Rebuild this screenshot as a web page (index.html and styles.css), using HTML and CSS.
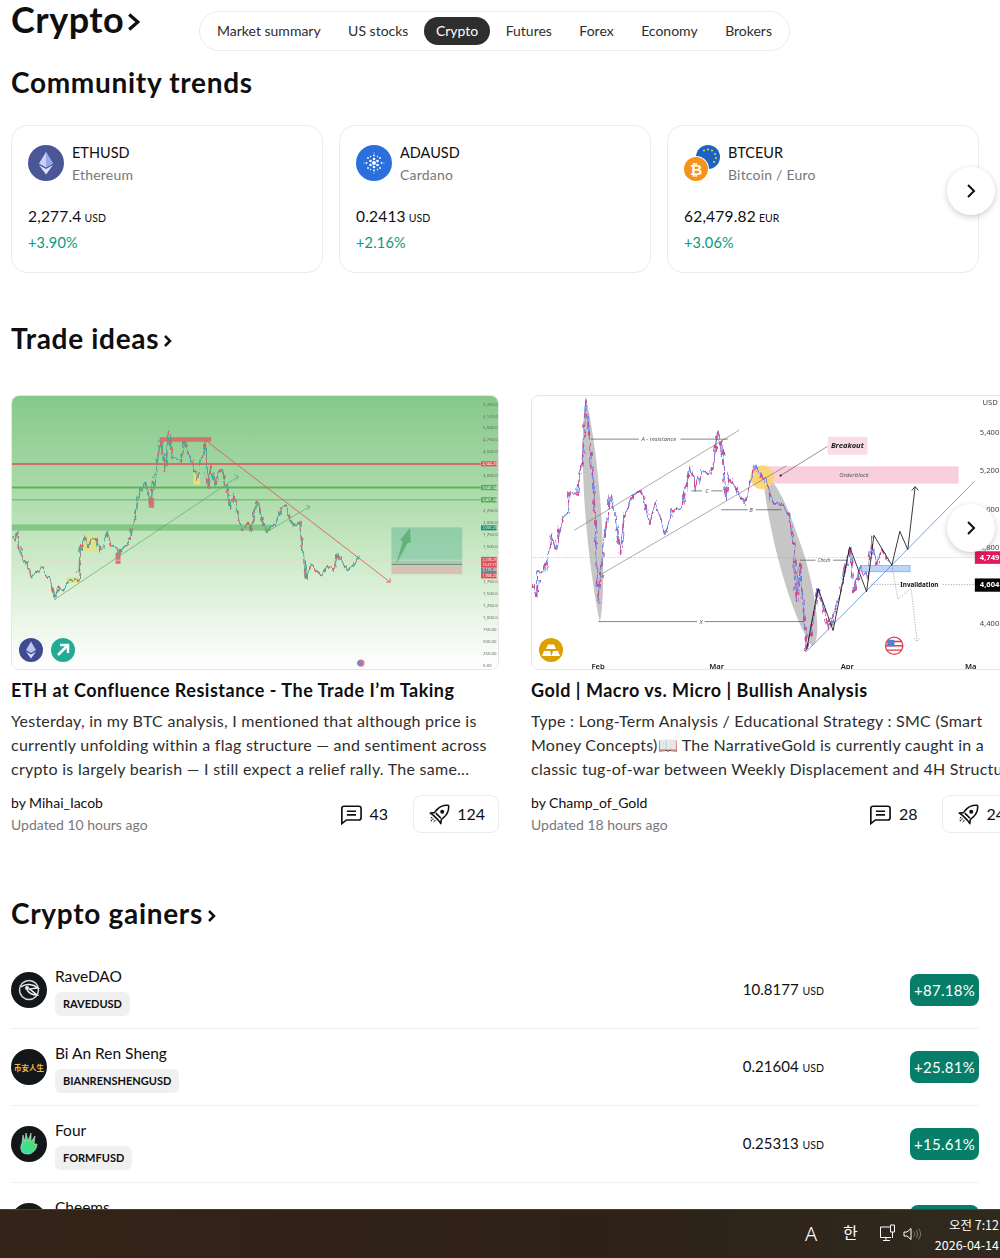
FILE: index.html
```html
<!DOCTYPE html>
<html lang="en">
<head>
<meta charset="utf-8">
<title>Crypto</title>
<link rel="stylesheet" href="styles.css">
</head>
<body>
<svg class="defs" width="0" height="0"><defs><filter id="jit" x="-5%" y="-5%" width="110%" height="110%"><feTurbulence type="fractalNoise" baseFrequency="0.1 0.035" numOctaves="2" seed="4"/><feDisplacementMap in="SourceGraphic" scale="20" xChannelSelector="R" yChannelSelector="G"/></filter></defs></svg>
<div class="page">
  <header class="top">
    <h1 class="title">Crypto<svg class="chev-lg" viewBox="0 0 12 18"><path d="M2 2l8 7-8 7" fill="none" stroke="currentColor" stroke-width="3"/></svg></h1>
    <nav class="tabs">
      <a class="tab">Market summary</a><a class="tab">US stocks</a><a class="tab active">Crypto</a><a class="tab">Futures</a><a class="tab">Forex</a><a class="tab">Economy</a><a class="tab">Brokers</a>
    </nav>
  </header>

  <h2 class="h-community">Community trends</h2>
  <section class="trends">
    <article class="trend">
      <div class="trend-head">
        <svg class="coin" viewBox="0 0 36 36"><circle cx="18" cy="18" r="18" fill="#4b5699"/><path d="M18 7l-7 11.500 7 4 7-4z" fill="#c9d2f5"/><path d="M18 7v15.500l7-4z" fill="#98a6e6"/><path d="M11 20l7 9.500 7-9.500-7 4z" fill="#dfe4fb"/></svg>
        <div class="trend-names"><div class="sym">ETHUSD</div><div class="desc-name">Ethereum</div></div>
      </div>
      <div class="quote">2,277.4<span class="cur">USD</span></div>
      <div class="chg">+3.90%</div>
    </article>
    <article class="trend">
      <div class="trend-head">
        <svg class="coin" viewBox="0 0 36 36"><circle cx="18" cy="18" r="18" fill="#2a6fdb"/><g fill="#fff"><circle cx="18" cy="18" r="2"/><circle cx="14.500" cy="16" r="1.300"/><circle cx="21.500" cy="16" r="1.300"/><circle cx="14.500" cy="20" r="1.300"/><circle cx="21.500" cy="20" r="1.300"/><circle cx="18" cy="14" r="1.300"/><circle cx="18" cy="22" r="1.300"/><circle cx="18" cy="10.500" r=".9"/><circle cx="18" cy="25.500" r=".9"/><circle cx="12" cy="13" r=".9"/><circle cx="24" cy="13" r=".9"/><circle cx="12" cy="23" r=".9"/><circle cx="24" cy="23" r=".9"/><circle cx="10.500" cy="18" r=".9"/><circle cx="25.500" cy="18" r=".9"/><circle cx="14.500" cy="11.500" r=".7"/><circle cx="21.500" cy="11.500" r=".7"/><circle cx="14.500" cy="24.500" r=".7"/><circle cx="21.500" cy="24.500" r=".7"/><circle cx="8" cy="18" r=".5"/><circle cx="28" cy="18" r=".5"/><circle cx="18" cy="8" r=".5"/><circle cx="18" cy="28" r=".5"/></g></svg>
        <div class="trend-names"><div class="sym">ADAUSD</div><div class="desc-name">Cardano</div></div>
      </div>
      <div class="quote">0.2413<span class="cur">USD</span></div>
      <div class="chg">+2.16%</div>
    </article>
    <article class="trend">
      <div class="trend-head">
        <svg class="coin" viewBox="0 0 36 36"><circle cx="24" cy="12" r="12" fill="#1d63c2"/><g fill="#f4d23c"><circle cx="24" cy="4.500" r="1"/><circle cx="28" cy="5.500" r="1"/><circle cx="31" cy="9" r="1"/><circle cx="32" cy="13" r="1"/><circle cx="30" cy="17" r="1"/><circle cx="20" cy="5.500" r="1"/></g><circle cx="12" cy="24" r="13" fill="#fff"/><circle cx="12" cy="24" r="12" fill="#f7931a"/><text class="btc-glyph" x="12" y="29.500" text-anchor="middle">₿</text></svg>
        <div class="trend-names"><div class="sym">BTCEUR</div><div class="desc-name">Bitcoin / Euro</div></div>
      </div>
      <div class="quote">62,479.82<span class="cur">EUR</span></div>
      <div class="chg">+3.06%</div>
    </article>
    <button class="next next-trends"><svg viewBox="0 0 18 18"><path d="M6 3l6 6-6 6" fill="none" stroke="currentColor" stroke-width="2"/></svg></button>
  </section>

  <h2 class="h-section h-ideas">Trade ideas<svg class="chev-md" viewBox="0 0 10 14"><path d="M2 2l5 5-5 5" fill="none" stroke="currentColor" stroke-width="2.500"/></svg></h2>
  <section class="ideas">
    <article class="idea">
      <div class="shot">
        <svg class="chart" viewBox="33 15 1464 823" preserveAspectRatio="none">
          <defs>
            <linearGradient id="gl" x1="0" y1="0" x2="0" y2="1">
              <stop offset="0" stop-color="#86c98a"/><stop offset=".3" stop-color="#a5d8a4"/><stop offset=".6" stop-color="#cdeac8"/><stop offset=".8" stop-color="#e8f5e4"/><stop offset="1" stop-color="#fff"/>
            </linearGradient>
          </defs>
          <rect x="33" y="15" width="1464" height="823" fill="url(#gl)"/>
          <rect x="33" y="402" width="780" height="19" fill="#70bd76" opacity=".75"/>
          <rect x="478" y="139" width="155" height="14" fill="#d1776a"/>
          <rect x="250" y="437" width="40" height="46" fill="#e9e17c" opacity=".85"/>
          <rect x="197" y="562" width="41" height="16" fill="#e9e17c" opacity=".9"/>
          <rect x="580" y="250" width="19" height="32" fill="#e9e17c"/>
          <rect x="445" y="322" width="16" height="30" fill="#d9737a"/>
          <rect x="345" y="488" width="15" height="33" fill="#d9737a"/>
          <rect x="1176" y="411" width="213" height="112" fill="#6dbb9b" opacity=".55"/>
          <rect x="1176" y="525" width="213" height="27" fill="#d9a7a0" opacity=".6"/>
          <path d="M33 220H1445" stroke="#df4f56" stroke-width="4"/>
          <path d="M33 291H1445" stroke="#5fb35f" stroke-width="6"/>
          <path d="M33 328H1445" stroke="#5fb35f" stroke-width="3"/>
          <path d="M33 510H1445" stroke="#e6d9c5" stroke-width="2"/>
          <path d="M1176 523H1389" stroke="#708d80" stroke-width="3"/>
          <path d="M162 628L715 257M703 252l12 5-6 12M800 425L930 348M918 344l12 4-6 11" fill="none" stroke="#5aa95f" stroke-width="2"/>
          <path d="M615 148L1172 576M1160 576h12v-12" fill="none" stroke="#e05260" stroke-width="2.500"/>
          <path d="M1190 522l20-68 -8-4 30-38 2 46 -8-2z" fill="#62b27b"/>
          <g class="jitter">
          <polyline class="price" stroke="#3fae9c" points="33,440 42,448 50,425 58,490 66,510 75,520 82,515 90,560 105,548 125,530 132,548 150,570 162,620 175,592 190,600 205,570 235,570 238,480 250,440 262,470 270,450 285,445 297,480 305,475 320,425 330,465 345,470 355,490 370,470 385,460 395,405 405,380 415,310 435,275 450,340 460,270 470,220 480,150 495,240 505,120 515,200 540,210 555,150 565,190 580,230 590,270 615,155 625,300 632,225 645,280 655,250 665,235 680,290 690,355 700,310 715,375 725,420 745,395 755,425 760,370 775,335 785,385 800,425 830,395 845,355 860,345 870,385 885,410 900,395 910,490 920,565 930,525 965,555 985,525 1000,540 1015,490 1030,520 1045,540 1060,525 1080,500"/>
          <polyline class="price price-red" stroke="#e0606a" points="33,440 42,448 50,425 58,490 66,510 75,520 82,515 90,560 105,548 125,530 132,548 150,570 162,620 175,592 190,600 205,570 235,570 238,480 250,440 262,470 270,450 285,445 297,480 305,475 320,425 330,465 345,470 355,490 370,470 385,460 395,405 405,380 415,310 435,275 450,340 460,270 470,220 480,150 495,240 505,120 515,200 540,210 555,150 565,190 580,230 590,270 615,155 625,300 632,225 645,280 655,250 665,235 680,290 690,355 700,310 715,375 725,420 745,395 755,425 760,370 775,335 785,385 800,425 830,395 845,355 860,345 870,385 885,410 900,395 910,490 920,565 930,525 965,555 985,525 1000,540 1015,490 1030,520 1045,540 1060,525 1080,500"/>
          </g>
          <g fill="#df4f56"><rect x="1446" y="212" width="47" height="15"/><rect x="1446" y="500" width="47" height="32"/><rect x="1446" y="549" width="47" height="16"/></g>
          <rect x="1446" y="532" width="47" height="17" fill="#7b7f8a"/>
          <g fill="#4fae55"><rect x="1446" y="283" width="47" height="16"/><rect x="1446" y="320" width="47" height="16"/></g>
          <rect x="1446" y="405" width="47" height="15" fill="#138b75"/>
          <g class="tagtx"><text x="1450" y="224">4,344.23</text><text x="1450" y="295">3,547.34</text><text x="1450" y="332">3,401.24</text><text x="1450" y="417">2,092.23</text><text x="1450" y="512">2,278.21</text><text x="1450" y="527">15:27:11</text><text x="1450" y="544">2,175.30</text><text x="1450" y="561">1,998.23</text></g>
          <g class="ticks"><text x="1452" y="45">5,250.00</text><text x="1452" y="80">5,125.00</text><text x="1452" y="115">5,000.00</text><text x="1452" y="151">4,750.00</text><text x="1452" y="187">4,500.00</text><text x="1452" y="258">3,000.00</text><text x="1452" y="365">2,250.00</text><text x="1452" y="401">2,000.00</text><text x="1452" y="437">1,750.00</text><text x="1452" y="473">1,500.00</text><text x="1452" y="580">1,750.00</text><text x="1452" y="615">1,500.00</text><text x="1452" y="651">1,250.00</text><text x="1452" y="687">1,000.00</text><text x="1452" y="723">750.00</text><text x="1452" y="759">500.00</text><text x="1452" y="795">250.00</text><text x="1452" y="831">0.00</text></g>
          <circle cx="1084" cy="820" r="11" fill="#e9506a" opacity=".8"/><circle cx="1081" cy="820" r="8" fill="#7d84c9"/>
        </svg>
        <div class="chips">
          <svg class="chip-icon" viewBox="0 0 24 24"><circle cx="12" cy="12" r="12" fill="#3f4a91"/><path d="M12 3.500l-5 8.500 5 3 5-3z" fill="#b9c4f0"/><path d="M7 13.500l5 7 5-7-5 3z" fill="#d9dff8"/></svg>
          <svg class="chip-icon" viewBox="0 0 24 24"><circle cx="12" cy="12" r="12" fill="#22ab94"/><path d="M7 17L16.500 7.500M9 7h8v8" fill="none" stroke="#fff" stroke-width="2.500"/></svg>
        </div>
      </div>
      <h3 class="idea-title">ETH at Confluence Resistance - The Trade I’m Taking</h3>
      <p class="idea-text">Yesterday, in my BTC analysis, I mentioned that although price is<br>currently unfolding within a flag structure — and sentiment across<br>crypto is largely bearish — I still expect a relief rally. The same...</p>
      <footer class="idea-foot">
        <div class="by"><div class="author">by Mihai_Iacob</div><div class="updated">Updated 10 hours ago</div></div>
        <div class="comments"><svg class="ic" viewBox="0 0 24 24"><path d="M2 22.500V6a2.500 2.500 0 0 1 2.500-2.500h16A2.500 2.500 0 0 1 23 6v10a2.500 2.500 0 0 1-2.500 2.500H7z" fill="none" stroke="currentColor" stroke-width="1.800"/><path d="M7.500 9h10M7.500 13h10" stroke="currentColor" stroke-width="1.800"/></svg><span>43</span></div>
        <div class="boost"><svg class="ic" viewBox="0 0 24 24"><path d="M22.500 2.500c-6-.5-10 1.500-13 5l-2.500 3-4.500.5L6 13.500M22.500 2.500c.5 6-1.500 10-5 13l-3 2.500-.5 4.500L11.500 19M8.500 11l5.500 5.500M6 13.500l5.500 5.500" fill="none" stroke="currentColor" stroke-width="1.700" stroke-linejoin="round"/><circle cx="15.500" cy="9.500" r="2.200" fill="currentColor"/><path d="M6 17l-3 3M8 19l-2 2M4.500 15.500l-2 2" stroke="currentColor" stroke-width="1.300" stroke-dasharray="1.500 1"/></svg><span>124</span></div>
      </footer>
    </article>
    <article class="idea">
      <div class="shot">
        <svg class="chart" viewBox="18 15 1464 823" preserveAspectRatio="none">
          <rect x="18" y="15" width="1464" height="823" fill="#fff"/>
          <rect x="680" y="227" width="623" height="52" fill="#f9cfdc"/>
          <path d="M180 15C150 240 200 600 222 695 240 640 240 300 180 15z" fill="#c6c6c6"/>
          <path d="M715 270C735 450 800 680 860 768 890 760 880 640 840 500 800 380 770 300 735 265z" fill="#c6c6c6"/>
          <circle cx="712" cy="260" r="36" fill="#fbd36a" opacity=".85"/>
          <path d="M18 502H1352" stroke="#ec7d96" stroke-width="1.500" stroke-dasharray="4 4"/>
          <g class="jitter">
          <polyline class="price-b" stroke="#6f8df0" points="18,580 32,620 38,545 55,548 65,500 78,430 92,480 108,385 125,370 130,305 155,310 170,210 180,25 190,120 205,320 218,640 235,450 255,310 270,380 285,490 295,380 320,315 350,300 372,400 390,335 420,430 440,360 470,350 495,225 510,295 530,240 560,250 578,120 590,165 602,330 610,255 640,310 660,340 690,225 720,270 745,340 770,340 790,370 808,470 815,640 825,515 845,785 860,720 880,595 912,715 945,620 975,470 990,605 1005,530 1030,565 1040,440 1055,525 1070,475 1090,510"/>
          <polyline class="price-b price-b-red" stroke="#d9447f" points="18,580 32,620 38,545 55,548 65,500 78,430 92,480 108,385 125,370 130,305 155,310 170,210 180,25 190,120 205,320 218,640 235,450 255,310 270,380 285,490 295,380 320,315 350,300 372,400 390,335 420,430 440,360 470,350 495,225 510,295 530,240 560,250 578,120 590,165 602,330 610,255 640,310 660,340 690,225 720,270 745,340 770,340 790,370 808,470 815,640 825,515 845,785 860,720 880,595 912,715 945,620 975,470 990,605 1005,530 1030,565 1040,440 1055,525 1070,475 1090,510"/>
          </g>
          <path d="M145 420L642 118M222 555L785 225" fill="none" stroke="#555" stroke-width="1.500"/>
          <path d="M195 145H340M465 145H608M498 301H530M558 301H592M588 358H668M692 358H770M825 510H872M925 510H970M218 695H515M538 695H838" stroke="#444" stroke-width="2" fill="none"/>
          <path d="M765 256L908 167" stroke="#222" stroke-width="1.500"/><circle cx="767" cy="255" r="3.500" fill="#222"/>
          <rect x="1010" y="526" width="147" height="19" fill="#bcd4f5" stroke="#79a4e8" stroke-width="2"/>
          <path d="M845 785L1350 273" stroke="#5a8be0" stroke-width="2.500"/>
          <path d="M845 780L880 595 925 722 975 470 1026 605 1048 435 1102 525 1126 423 1150 478 1172 290M1162 300l10-12 10 12" fill="none" stroke="#111" stroke-width="2.500"/>
          <path d="M1102 525l18 102 40-32 18 158M1170 745l8 10 8-10M1040 583H1130M1255 583H1352" fill="none" stroke="#666" stroke-width="1.500" stroke-dasharray="4 4"/>
          <rect x="909" y="138" width="120" height="54" rx="5" fill="#f8dde4"/>
          <text class="ct ct-bold" x="968" y="172" text-anchor="middle">Breakout</text>
          <text class="ct ct-sm" x="400" y="151" text-anchor="middle">A - resistance</text>
          <text class="ct ct-sm" x="988" y="260" text-anchor="middle">Orderblock</text>
          <text class="ct ct-sm" x="545" y="308" text-anchor="middle">C</text>
          <text class="ct ct-sm" x="678" y="365" text-anchor="middle">B</text>
          <text class="ct ct-xs" x="898" y="516" text-anchor="middle">Choch</text>
          <text class="ct ct-sm" x="527" y="703" text-anchor="middle">X</text>
          <text class="ct ct-inv" x="1185" y="592" text-anchor="middle">Invalidation</text>
          <g class="axis"><text x="1375" y="42">USD</text><text x="1367" y="134">5,400</text><text x="1367" y="248">5,200</text><text x="1367" y="364">5,000</text><text x="1367" y="478">4,800</text><text x="1367" y="708">4,400</text></g>
          <g class="axis axis-t"><text x="197" y="838">Feb</text><text x="552" y="838">Mar</text><text x="948" y="838">Apr</text><text x="1322" y="838">Ma</text></g>
          <rect x="1352" y="483" width="130" height="38" fill="#e0195f"/><text class="ct-tag" x="1367" y="509">4,749</text>
          <rect x="1352" y="565" width="130" height="40" fill="#000"/><text class="ct-tag" x="1367" y="592">4,604</text>
          <circle cx="1109" cy="768" r="26" fill="#fff" stroke="#e23b4a" stroke-width="4"/><path d="M1086 755h46M1084 768h50M1086 781h46" stroke="#e23b4a" stroke-width="4"/><rect x="1088" y="750" width="22" height="20" fill="#5a7fc7"/>
        </svg>
        <div class="chips">
          <svg class="chip-icon" viewBox="0 0 24 24"><circle cx="12" cy="12" r="12" fill="#dca000"/><path d="M9 6.500h6L17 11H7zM3 18l2-5h6l1.500 5zM12.500 18l1.500-5h5l2 5z" fill="#fff"/></svg>
        </div>
      </div>
      <h3 class="idea-title">Gold | Macro vs. Micro | Bullish Analysis</h3>
      <p class="idea-text">Type : Long-Term Analysis / Educational Strategy : SMC (Smart<br>Money Concepts)📖 The NarrativeGold is currently caught in a<br>classic tug-of-war between Weekly Displacement and 4H Structure</p>
      <footer class="idea-foot">
        <div class="by"><div class="author">by Champ_of_Gold</div><div class="updated">Updated 18 hours ago</div></div>
        <div class="comments"><svg class="ic" viewBox="0 0 24 24"><path d="M2 22.500V6a2.500 2.500 0 0 1 2.500-2.500h16A2.500 2.500 0 0 1 23 6v10a2.500 2.500 0 0 1-2.500 2.500H7z" fill="none" stroke="currentColor" stroke-width="1.800"/><path d="M7.500 9h10M7.500 13h10" stroke="currentColor" stroke-width="1.800"/></svg><span>28</span></div>
        <div class="boost"><svg class="ic" viewBox="0 0 24 24"><path d="M22.500 2.500c-6-.5-10 1.500-13 5l-2.500 3-4.500.5L6 13.500M22.500 2.500c.5 6-1.500 10-5 13l-3 2.500-.5 4.500L11.500 19M8.500 11l5.500 5.500M6 13.500l5.500 5.500" fill="none" stroke="currentColor" stroke-width="1.700" stroke-linejoin="round"/><circle cx="15.500" cy="9.500" r="2.200" fill="currentColor"/><path d="M6 17l-3 3M8 19l-2 2M4.500 15.500l-2 2" stroke="currentColor" stroke-width="1.300" stroke-dasharray="1.500 1"/></svg><span>24</span></div>
      </footer>
    </article>
    <button class="next next-ideas"><svg viewBox="0 0 18 18"><path d="M6 3l6 6-6 6" fill="none" stroke="currentColor" stroke-width="2"/></svg></button>
  </section>

  <h2 class="h-section h-gainers">Crypto gainers<svg class="chev-md" viewBox="0 0 10 14"><path d="M2 2l5 5-5 5" fill="none" stroke="currentColor" stroke-width="2.500"/></svg></h2>
  <section class="gainers">
    <div class="row">
      <svg class="row-logo" viewBox="0 0 36 36"><circle cx="18" cy="18" r="18" fill="#14171a"/><circle cx="18" cy="18" r="9.500" fill="none" stroke="#d8d8d8" stroke-width="1.500"/><path d="M10 15c5-4 12-3 17 1-4 0-7 1-9 1 3 1 5 4 8 6-5 0-8-2-10-5" fill="none" stroke="#eee" stroke-width="1.500"/><circle cx="16" cy="16" r="2" fill="#eee"/></svg>
      <div class="row-names"><div class="row-name">RaveDAO</div><span class="tag">RAVEDUSD</span></div>
      <div class="row-price">10.8177<span class="cur">USD</span></div>
      <div class="badge">+87.18%</div>
    </div>
    <div class="row">
      <svg class="row-logo" viewBox="0 0 36 36"><circle cx="18" cy="18" r="18" fill="#14171a"/><text class="cn-glyph" x="18" y="21.500" text-anchor="middle">币安人生</text></svg>
      <div class="row-names"><div class="row-name">Bi An Ren Sheng</div><span class="tag">BIANRENSHENGUSD</span></div>
      <div class="row-price">0.21604<span class="cur">USD</span></div>
      <div class="badge">+25.81%</div>
    </div>
    <div class="row">
      <svg class="row-logo" viewBox="0 0 36 36"><defs><linearGradient id="hand" x1="0" y1="1" x2="1" y2="0"><stop offset="0" stop-color="#2ee6a6"/><stop offset="1" stop-color="#5fd35a"/></linearGradient></defs><circle cx="18" cy="18" r="18" fill="#14171a"/><path d="M11 26c-2-4-1-7 0-9l1-8 2 7 1-9 2 8 3-8 0 9 4-6-1 8 3 0c0 4-3 9-8 10-3 0-5 0-7-2z" fill="url(#hand)" stroke="#ddd" stroke-width=".6"/></svg>
      <div class="row-names"><div class="row-name">Four</div><span class="tag">FORMFUSD</span></div>
      <div class="row-price">0.25313<span class="cur">USD</span></div>
      <div class="badge">+15.61%</div>
    </div>
    <div class="row">
      <svg class="row-logo" viewBox="0 0 36 36"><circle cx="18" cy="18" r="18" fill="#1a1a1a"/></svg>
      <div class="row-names"><div class="row-name">Cheems</div><span class="tag">CHEEMSUSD</span></div>
      <div class="row-price">0.00000<span class="cur">USD</span></div>
      <div class="badge">+12.40%</div>
    </div>
  </section>
</div>

<footer class="taskbar">
  <span class="tray-a">A</span>
  <span class="tray-ko">한</span>
  <svg class="tray-net" viewBox="0 0 18 18"><path d="M12 3H1.500v10.500H12M4 16.500h7M7 13.500v3M11.500 1h4v7h-4zM13.500 8v6" fill="none" stroke="#fff" stroke-width="1"/></svg>
  <svg class="tray-vol" viewBox="0 0 18 14"><path d="M1 5h3l4-3.500v11L4 9H1z" fill="none" stroke="#fff"/><path d="M10.500 4.500a3 3 0 0 1 0 5M13 3a6 6 0 0 1 0 8M15.500 1.500a9 9 0 0 1 0 11" fill="none" stroke="#777"/></svg>
  <div class="clock"><div>오전 7:12</div><div>2026-04-14</div></div>
</footer>
</body>
</html>
```
FILE: styles.css
```css
* { box-sizing: border-box; }
html, body { margin: 0; height: 1258px; overflow: hidden; background: #fff; }
body { position: relative; font-family: Lato, "Noto Sans CJK KR", sans-serif; color: #0f0f0f; }
h1, h2, h3, p { margin: 0; }
.defs { display: block; height: 0; }
.page { height: 1258px; overflow: hidden; padding-left: 11px; }

.top { display: flex; height: 63px; }
.title { width: 188px; font-size: 36px; line-height: 38px; letter-spacing: .5px; font-weight: 700; display: flex; align-items: center; height: 40px; padding-bottom: 2px; }
.chev-lg { width: 13px; height: 20px; margin-left: 3px; margin-top: 6px; flex: none; }
.tabs { margin-top: 11px; height: 40px; width: 591px; border: 1px solid #ebebeb; border-radius: 20px; display: flex; align-items: center; justify-content: space-between; padding: 0 5px; }
.tab { padding: 0 12px; font-size: 14px; line-height: 28px; height: 28px; color: #2e2e2e; border-radius: 14px; white-space: nowrap; }
.tab.active { background: #2e2e2e; color: #fff; }

.h-community, .h-section { font-size: 28px; line-height: 38px; padding-bottom: 2px; letter-spacing: .7px; font-weight: 700; display: flex; align-items: center; }
.chev-md { width: 10px; height: 14px; margin-left: 4px; margin-top: 5px; flex: none; }

.trends { margin-top: 22px; display: flex; gap: 16px; position: relative; }
.trend { flex: 0 0 312px; height: 148px; border: 1px solid #ebebeb; border-radius: 16px; padding: 19px 16px 0; }
.trend-head { display: flex; gap: 8px; height: 36px; }
.coin { width: 36px; height: 36px; flex: none; }
.btc-glyph { font: 700 15px "DejaVu Sans", sans-serif; fill: #fff; }
.trend-names { margin-top: -3px; }
.sym { font-size: 14.500px; line-height: 22px; }
.desc-name { font-size: 14px; line-height: 22px; color: #787878; letter-spacing: .2px; }
.quote { margin-top: 23px; font-size: 15.500px; line-height: 24px; letter-spacing: .2px; }
.cur { font-size: 10.500px; margin-left: 3px; letter-spacing: 0; }
.chg { margin-top: 1px; font-size: 14.500px; line-height: 24px; color: #089981; letter-spacing: .2px; }

.next { position: absolute; width: 48px; height: 48px; border-radius: 50%; border: 0; background: #fff; box-shadow: 0 2px 6px rgba(0,0,0,.2); display: flex; align-items: center; justify-content: center; padding: 0; color: #0f0f0f; }
.next svg { width: 18px; height: 18px; }
.next-trends { left: 936px; top: 42px; }
.next-ideas { left: 936px; top: 109px; }

.h-ideas { margin-top: 46px; }
.ideas { margin-top: 36px; display: flex; gap: 32px; position: relative; height: 441px; width: 989px; overflow: hidden; }
.idea { flex: 0 0 488px; }
.shot { position: relative; height: 275px; border: 1px solid #e6e6e6; border-radius: 8px; overflow: hidden; }
.chart { display: block; width: 100%; height: 100%; filter: blur(.5px); }
.jitter { filter: url(#jit); }
.price, .price-b { fill: none; stroke-width: 4.5; }
.price-red { stroke-dasharray: 12 14; }
.price-b-red { stroke-dasharray: 14 16; }
.ticks text { font-size: 13px; fill: #5d6a5e; font-family: "Noto Sans", sans-serif; }
.tagtx text { font-size: 11px; fill: #fff; font-family: "Noto Sans", sans-serif; }
.ct { fill: #222; font-family: "Noto Sans", sans-serif; }
.ct-sm { font-size: 18px; font-style: italic; fill: #555; }
.ct-xs { font-size: 14px; font-style: italic; fill: #555; }
.ct-bold { font-size: 23px; font-weight: 700; font-style: italic; }
.ct-inv { font-size: 19px; font-weight: 700; fill: #111; }
.axis text { font-size: 23px; fill: #444; font-family: "Noto Sans", sans-serif; }
.axis-t text { font-weight: 600; fill: #222; }
.ct-tag { font: 700 23px "Noto Sans", sans-serif; fill: #fff; }
.chips { position: absolute; left: 7px; bottom: 7px; display: flex; gap: 8px; }
.chip-icon { width: 24px; height: 24px; display: block; }

.idea-title { margin-top: 8px; font-size: 18px; line-height: 24px; letter-spacing: .5px; font-weight: 700; white-space: nowrap; }
.idea-text { margin-top: 7px; font-size: 16px; line-height: 24px; letter-spacing: .26px; color: #2e2e2e; height: 72px; overflow: hidden; white-space: nowrap; }
.idea-foot { margin-top: 11px; display: flex; align-items: center; height: 44px; }
.by { flex: 1; }
.author { font-size: 14px; line-height: 22px; }
.updated { font-size: 14px; line-height: 22px; color: #787878; }
.comments { display: flex; align-items: center; gap: 8px; font-size: 16px; margin-right: 25px; }
.boost { display: flex; align-items: center; gap: 7px; font-size: 16px; height: 38px; flex: none; border: 1px solid #ebebeb; border-radius: 8px; padding: 0 13px 0 14px; }
.comments span, .boost span { margin-bottom: 2px; }
.ic { width: 22px; height: 22px; display: block; flex: none; }

.h-gainers { margin-top: 58px; }
.gainers { margin-top: 18px; width: 968px; }
.row { height: 77px; border-bottom: 1px solid #f0f0f0; display: flex; align-items: center; }
.row-logo { width: 36px; height: 36px; flex: none; }
.cn-glyph { font: 700 7.500px "Noto Sans CJK SC", sans-serif; fill: #e8b93c; }
.row-names { margin-left: 8px; display: flex; flex-direction: column; align-items: flex-start; gap: 5px; }
.row-name { font-size: 15.500px; line-height: 22px; }
.tag { font-size: 11px; font-weight: 700; line-height: 24px; height: 24px; padding: 0 8px; background: #f0f0f0; border-radius: 6px; }
.row-price { margin-left: auto; font-size: 15px; line-height: 24px; }
.row-price .cur { margin-left: 4px; }
.badge { margin-left: 86px; width: 69px; height: 32px; border-radius: 8px; background: #077e69; color: #fff; font-size: 15px; line-height: 32px; text-align: center; white-space: nowrap; letter-spacing: .3px; }

.taskbar { position: absolute; left: 0; right: 0; top: 1209px; height: 49px; background: linear-gradient(90deg, #33241a, #2e2118 60%, #302a1e); border-top: 1px solid #4a4038; display: flex; align-items: center; justify-content: flex-end; color: #fff; overflow: hidden; }
.tray-a { position: absolute; left: 805px; top: 10px; font: 300 20px "Noto Sans", sans-serif; }
.tray-ko { position: absolute; left: 843px; top: 10px; font: 16px "Noto Sans CJK KR", sans-serif; }
.tray-net { position: absolute; left: 879px; top: 14px; width: 18px; height: 18px; }
.tray-vol { position: absolute; left: 903px; top: 17px; width: 18px; height: 14px; }
.clock { position: absolute; right: 1px; top: 5px; font: 12.500px/20px "Noto Sans CJK KR", "Liberation Sans", sans-serif; text-align: right; white-space: nowrap; }
```
